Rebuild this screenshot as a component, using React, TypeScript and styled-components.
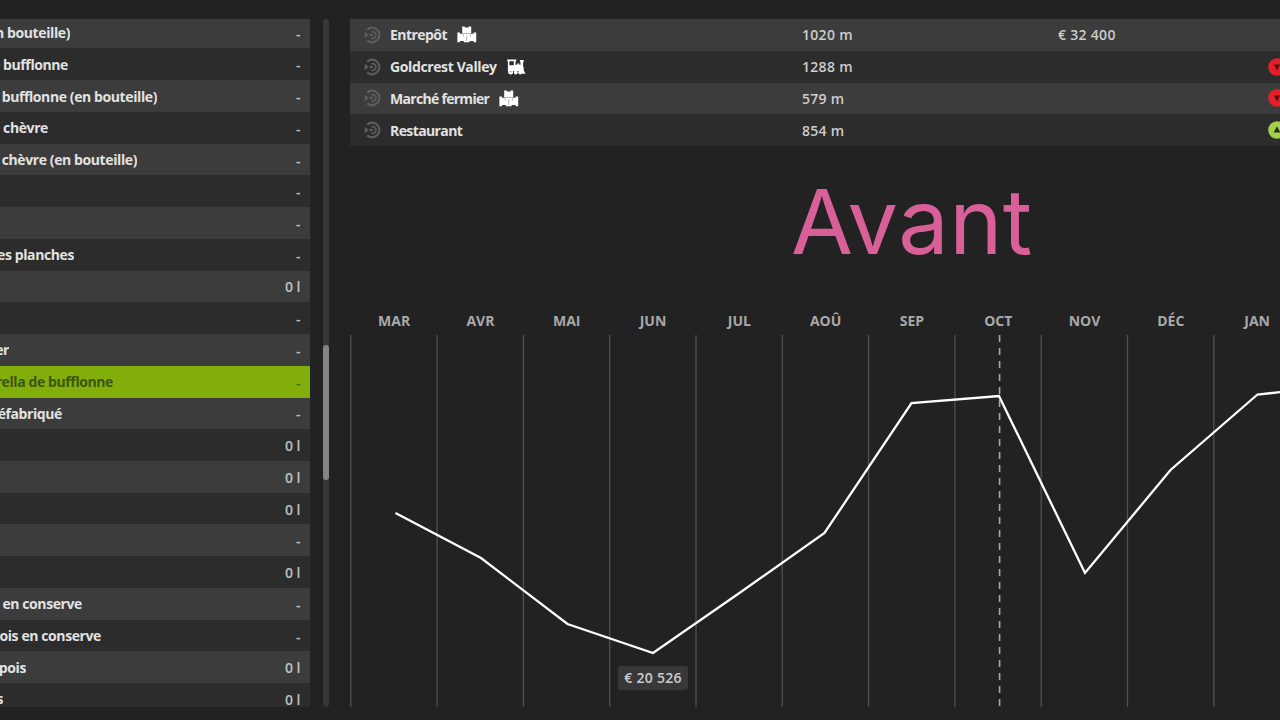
import React from "react";
import styled, { createGlobalStyle } from "styled-components";

interface Product {
  label?: string;
  end?: number;
  amount: string;
  selected?: boolean;
}

interface SellPoint {
  name: string;
  tracking: number;
  icon?: "crates" | "train";
  distance: string;
  price?: string;
  trend?: "up" | "down";
}

// end = right edge of the label, the list is scrolled past its left side
const products: Product[] = [
  { label: "n bouteille)", end: 70, amount: "-" },
  { label: "e bufflonne", end: 68, amount: "-" },
  { label: "e bufflonne (en bouteille)", end: 157, amount: "-" },
  { label: "e chèvre", end: 48, amount: "-" },
  { label: "e chèvre (en bouteille)", end: 137, amount: "-" },
  { amount: "-" },
  { amount: "-" },
  { label: "es planches", end: 74, amount: "-" },
  { amount: "0 l" },
  { amount: "-" },
  { label: "er", end: 9, amount: "-" },
  { label: "rella de bufflonne", end: 113, amount: "-", selected: true },
  { label: "éfabriqué", end: 62, amount: "-" },
  { amount: "0 l" },
  { amount: "0 l" },
  { amount: "0 l" },
  { amount: "-" },
  { amount: "0 l" },
  { label: "en conserve", end: 82, amount: "-" },
  { label: "ois en conserve", end: 101, amount: "-" },
  { label: "pois", end: 26, amount: "0 l" },
  { label: "s", end: 3, amount: "0 l" },
];

const sellPoints: SellPoint[] = [
  { name: "Entrepôt", tracking: -0.55, icon: "crates", distance: "1020 m", price: "€ 32 400" },
  { name: "Goldcrest Valley", tracking: -0.38, icon: "train", distance: "1288 m", trend: "down" },
  { name: "Marché fermier", tracking: -0.7, icon: "crates", distance: "579 m", trend: "down" },
  { name: "Restaurant", tracking: -0.6, distance: "854 m", trend: "up" },
];

const months = ["MAR", "AVR", "MAI", "JUN", "JUL", "AOÛ", "SEP", "OCT", "NOV", "DÉC", "JAN"];

const COLUMN = 86.3;

const prices = [
  [45.5, 178],
  [131, 223],
  [217.5, 289],
  [303, 318],
  [388, 259],
  [474.5, 198],
  [561.5, 68],
  [649, 61],
  [735, 238],
  [820.5, 135],
  [907.5, 59.5],
  [932, 57],
];

function TargetIcon() {
  return (
    <svg width="18" height="18" viewBox="0 0 18 18" fill="none" stroke="#5c5c5c">
      <path d="M3.2 3.6A7.3 7.3 0 1 1 3.2 14.4" strokeWidth="2.2" />
      <path d="M7.4 5.8a3.4 3.4 0 1 1 0 6.4" strokeWidth="1.7" />
      <path d="M0.6 5.8 5 9l-4.4 3.2z" fill="#5c5c5c" stroke="none" />
      <path d="M6 7.2 10 9l-4 1.8z" fill="#5c5c5c" stroke="none" />
    </svg>
  );
}

function CratesIcon() {
  return (
    <svg width="20" height="17" viewBox="0 0 20 17" fill="#fff">
      <path d="M5.2 0.4h2.6v1.2h3.8V0.4h2.6V7.6h-9z" />
      <path d="M0.4 6.4h2.6v1.3h13.6V6.4h2.6v9.8h-2.6v-1.3h-4v1.3H6.8v-1.3H3v1.3H0.4z" />
      <path d="M5.9 8.2h.6v2.4h-.6zM13.1 8.2h.6v2.4h-.6zM9.5 9.4h.6v5.4h-.6z" fill="#858585" />
    </svg>
  );
}

function TrainIcon() {
  return (
    <svg width="19" height="16" viewBox="0 0 19 16">
      <path
        fill="#fff"
        fillRule="evenodd"
        d="M0.2 0.6h9v1.6h-.7v3.6h1.8V4.4h2v1.4h1.2V3h-.6V1h3.8v2h-.6v4.4l.6 1.2v2.6l1.8 3.6h-3.4l-1.2-2.8H.9V2.2H.2zM2.4 2.2v4h4.4v-4z"
      />
      <circle cx="3.6" cy="12.8" r="2.6" fill="#fff" />
      <circle cx="3.6" cy="12.8" r="0.8" fill="#777" />
      <circle cx="8.8" cy="13.5" r="1.9" fill="#fff" />
      <circle cx="13.2" cy="13.5" r="1.9" fill="#fff" />
    </svg>
  );
}

function TrendIcon({ trend }: { trend: "up" | "down" }) {
  const up = trend === "up";
  return (
    <svg width="18" height="18" viewBox="0 0 18 18">
      <circle cx="9" cy="9" r="8.8" fill={up ? "#a5cd4e" : "#e3202a"} />
      <path d={up ? "M9 5.2 12.4 11.6H5.6z" : "M9 12.4 12.2 6.4H5.8z"} fill={up ? "#26330c" : "#5c0d10"} />
    </svg>
  );
}

function PriceChart() {
  return (
    <Chart>
      <Months>
        {months.map((month) => (
          <span key={month}>{month}</span>
        ))}
      </Months>
      <Plot>
        <svg width="930" height="372" viewBox="0 0 930 372" fill="none">
          {months.map((month, i) => (
            <path key={month} d={`M${0.8 + i * COLUMN} 0V372`} stroke="#505050" strokeWidth="1.3" />
          ))}
          <path d="M649.6 0V372" stroke="#a8a8a8" strokeWidth="1.6" strokeDasharray="7 6" />
          <polyline points={prices.map((p) => p.join(",")).join(" ")} stroke="#fff" strokeWidth="2.3" />
        </svg>
        <PriceTag>€ 20 526</PriceTag>
      </Plot>
    </Chart>
  );
}

function App() {
  return (
    <Screen>
      <GlobalStyle />
      <ProductList>
        <Rows>
          {products.map((product, i) => (
            <ProductRow key={i} $light={i % 2 === 0} $selected={product.selected}>
              <ProductName $end={product.end || 0}>{product.label}</ProductName>
              <Amount>{product.amount}</Amount>
            </ProductRow>
          ))}
        </Rows>
      </ProductList>
      <ScrollTrack>
        <ScrollThumb />
      </ScrollTrack>
      <Details>
        {sellPoints.map((point, i) => (
          <SellRow key={point.name} $light={i % 2 === 0}>
            <TargetIcon />
            <SellName $tracking={point.tracking}>
              {point.name}
              {point.icon === "crates" && <CratesIcon />}
              {point.icon === "train" && <TrainIcon />}
            </SellName>
            <Value>{point.distance}</Value>
            <Value>{point.price}</Value>
            {point.trend && <TrendIcon trend={point.trend} />}
          </SellRow>
        ))}
        <Heading>Avant</Heading>
        <PriceChart />
      </Details>
    </Screen>
  );
}

export default App;

const GlobalStyle = createGlobalStyle`
  * {
    box-sizing: border-box;
  }
  body {
    margin: 0;
    background: #222222;
    overflow: hidden;
  }
  svg {
    display: block;
    flex: none;
  }
`;

const Screen = styled.div`
  width: 1280px;
  height: 720px;
  padding-top: 19px;
  display: flex;
  overflow: hidden;
  background: #222222;
  color: #e2e2e2;
  font-family: "Open Sans", "Noto Sans", sans-serif;
  font-size: 14px;
  font-weight: 700;
  white-space: nowrap;
`;

const ProductList = styled.div`
  width: 309.5px;
  height: 687.5px;
  overflow: hidden;
`;

const Rows = styled.div`
  margin-top: -2.3px;
`;

const ProductRow = styled.div<{ $light: boolean; $selected?: boolean }>`
  height: 31.74px;
  padding: 1px 9px 0 0;
  display: flex;
  align-items: center;
  justify-content: space-between;
  background: ${({ $light, $selected }) => ($selected ? "#82ae0c" : $light ? "#3c3c3c" : "#2c2c2c")};
  color: ${({ $selected }) => ($selected ? "#3b560a" : "#e2e2e2")};
`;

const ProductName = styled.div<{ $end: number }>`
  width: ${({ $end }) => $end}px;
  display: flex;
  justify-content: flex-end;
  overflow: hidden;
  line-height: 24px;
  letter-spacing: -0.4px;
`;

const Amount = styled.div`
  font-weight: 600;
  opacity: 0.8;
`;

const ScrollTrack = styled.div`
  width: 6px;
  height: 688px;
  margin-left: 13.5px;
  padding-top: 326px;
  border-radius: 3px;
  background: #373737;
`;

const ScrollThumb = styled.div`
  height: 135px;
  border-radius: 3px;
  background: #858585;
`;

const Details = styled.div`
  width: 930px;
  margin-left: 21px;
  flex: none;
`;

const SellRow = styled.div<{ $light: boolean }>`
  height: 31.8px;
  padding-left: 14px;
  display: grid;
  grid-template-columns: 26px 412px 256px 210px 18px;
  align-items: center;
  background: ${({ $light }) => ($light ? "#3c3c3c" : "#2c2c2c")};
`;

const SellName = styled.div<{ $tracking: number }>`
  display: flex;
  align-items: center;
  gap: 10px;
  letter-spacing: ${({ $tracking }) => $tracking}px;
`;

const Value = styled.div`
  color: #cdcdcd;
  font-weight: 600;
  letter-spacing: 0.3px;
`;

const Heading = styled.div`
  height: 110px;
  margin: 21px 0 0 441px;
  color: #d85f97;
  font-family: Inter, "Liberation Sans", sans-serif;
  font-size: 90px;
  font-weight: 400;
  line-height: 110px;
  letter-spacing: 0.5px;
`;

const Chart = styled.div`
  margin-top: 31.5px;
`;

const Months = styled.div`
  height: 26px;
  margin-left: 1px;
  display: grid;
  grid-template-columns: repeat(11, 86.3px);
  color: #a9a9a9;
  text-align: center;
  line-height: 24px;
`;

const Plot = styled.div`
  position: relative;
`;

const PriceTag = styled.div`
  position: absolute;
  left: 268px;
  top: 331px;
  width: 70px;
  height: 24px;
  border-radius: 3px;
  background: #383838;
  color: #cdcdcd;
  font-weight: 600;
  line-height: 24px;
  letter-spacing: 0.3px;
  text-align: center;
`;
